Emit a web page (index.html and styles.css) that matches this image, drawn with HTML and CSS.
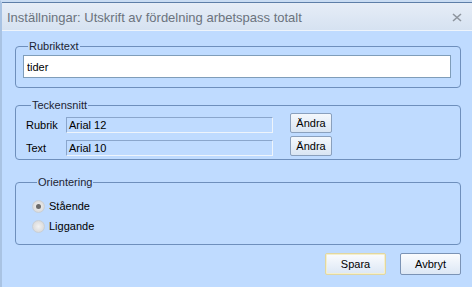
FILE: index.html
```html
<!DOCTYPE html>
<html lang="sv">
<head>
    <meta charset="UTF-8">
    <meta name="viewport" content="width=device-width, initial-scale=1.0">
    <title>Inställningar</title>
<link rel="stylesheet" href="styles.css">
</head>
<body>
    <div class="window">
        <div class="titlebar">
            <span class="title">Inställningar: Utskrift av fördelning arbetspass totalt</span>
            <svg class="close" width="10" height="9" viewBox="0 0 10 9">
                <path d="M1 1 L9 8 M9 1 L1 8" stroke="#8e959e" stroke-width="1.6" fill="none"/>
            </svg>
        </div>

        <div class="content">
            <fieldset class="group group-heading">
                <legend>Rubriktext</legend>
                <input type="text" class="text-input" value="tider">
            </fieldset>

            <fieldset class="group group-font">
                <legend>Teckensnitt</legend>
                <div class="font-row">
                    <span class="font-label">Rubrik</span>
                    <span class="font-box">Arial 12</span>
                    <button class="small-btn">Ändra</button>
                </div>
                <div class="font-row">
                    <span class="font-label">Text</span>
                    <span class="font-box">Arial 10</span>
                    <button class="small-btn">Ändra</button>
                </div>
            </fieldset>

            <fieldset class="group group-orient">
                <legend>Orientering</legend>
                <label class="radio-row">
                    <span class="radio checked"></span>
                    <span>Stående</span>
                </label>
                <label class="radio-row">
                    <span class="radio"></span>
                    <span>Liggande</span>
                </label>
            </fieldset>

            <div class="actions">
                <button class="btn btn-default">Spara</button>
                <button class="btn">Avbryt</button>
            </div>
        </div>
    </div>
</body>
</html>
```

FILE: styles.css
```css
body{
    margin: 0;
    background: #bfdbff;
    font-family: "Liberation Sans", Arial, sans-serif;
    font-size: 11px;
    color: #000;
}

.window{
    width: 472px;
    height: 287px;
    box-sizing: border-box;
    border-top: 3px solid #c9dcf3;
    border-left: 2px solid #a9c3e3;
    background: #bfdbff;
    position: relative;
}

.window::before{
    content: "";
    position: absolute;
    left: 0;
    right: 0;
    top: -1px;
    height: 1px;
    background: #5d7ea8;
}

.titlebar{
    height: 27px;
    display: flex;
    align-items: center;
    justify-content: space-between;
    padding: 0 10px 0 5px;
    background: linear-gradient(#e6edf7, #d6e2f1);
    border-bottom: 1px solid #eef4fb;
}

.title{
    font-size: 13px;
    color: #6b737d;
    padding-top: 1px;
}

.close{
    margin-top: 1px;
}

.content{
    display: flex;
    flex-direction: column;
    padding: 9px 11px 0 13px;
}

.group{
    margin: 0;
    border: 1px solid #6e8fbc;
    border-radius: 4px;
}

.group legend{
    padding: 0 1px;
    margin-left: 5px;
    line-height: 13px;
    color: #1c2433;
}

.group-heading{
    padding: 2px 9px 9px 7px;
}

.text-input{
    display: block;
    width: 100%;
    height: 23px;
    box-sizing: border-box;
    border: 1px solid #7f9db9;
    padding: 1px 3px;
    font-family: "Liberation Sans", Arial, sans-serif;
    font-size: 11px;
    outline: none;
    background: #fff;
}

.group-font{
    margin-top: 11px;
    padding: 1px 10px 3px 10px;
}

.font-row{
    display: flex;
    align-items: center;
    height: 20px;
}

.font-row + .font-row{
    margin-top: 3px;
}

.font-label{
    width: 40px;
    padding-top: 3px;
}

.font-box{
    width: 207px;
    height: 16px;
    box-sizing: border-box;
    border: 1px solid;
    border-color: #8aa6cc #eef4fb #eef4fb #8aa6cc;
    padding: 0 2px;
    line-height: 14px;
    margin-top: 3px;
}

.small-btn{
    margin-left: 17px;
    width: 42px;
    height: 20px;
    border: 1px solid #8aa0bd;
    border-radius: 2px;
    background: linear-gradient(#f4f8fd, #d9e5f3);
    font-family: "Liberation Sans", Arial, sans-serif;
    font-size: 11px;
    padding: 0;
    color: #000;
}

.group-orient{
    margin-top: 16px;
    padding: 7px 10px 8px 16px;
}

.radio-row{
    display: flex;
    align-items: center;
    height: 20px;
    gap: 4px;
}

.radio{
    width: 11px;
    height: 11px;
    border-radius: 50%;
    border: 1px solid #c9cfd6;
    background: radial-gradient(circle at 50% 50%, #f2f2f2 0, #dcdcdc 70%, #c4c4c4 100%);
    position: relative;
}

.radio.checked::after{
    content: "";
    position: absolute;
    left: 3px;
    top: 3px;
    width: 5px;
    height: 5px;
    border-radius: 50%;
    background: #6a6a6a;
}

.actions{
    display: flex;
    justify-content: flex-end;
    gap: 14px;
    margin-top: 8px;
}

.btn{
    width: 61px;
    height: 22px;
    border: 1px solid #7b93b5;
    border-radius: 2px;
    background: linear-gradient(#fbfcfe, #dce7f5);
    font-family: "Liberation Sans", Arial, sans-serif;
    font-size: 11px;
    padding: 0;
    color: #000;
}

.btn-default{
    border-color: #e2d7a0;
    box-shadow: inset 0 0 0 1px #f4efcd;
}
```
